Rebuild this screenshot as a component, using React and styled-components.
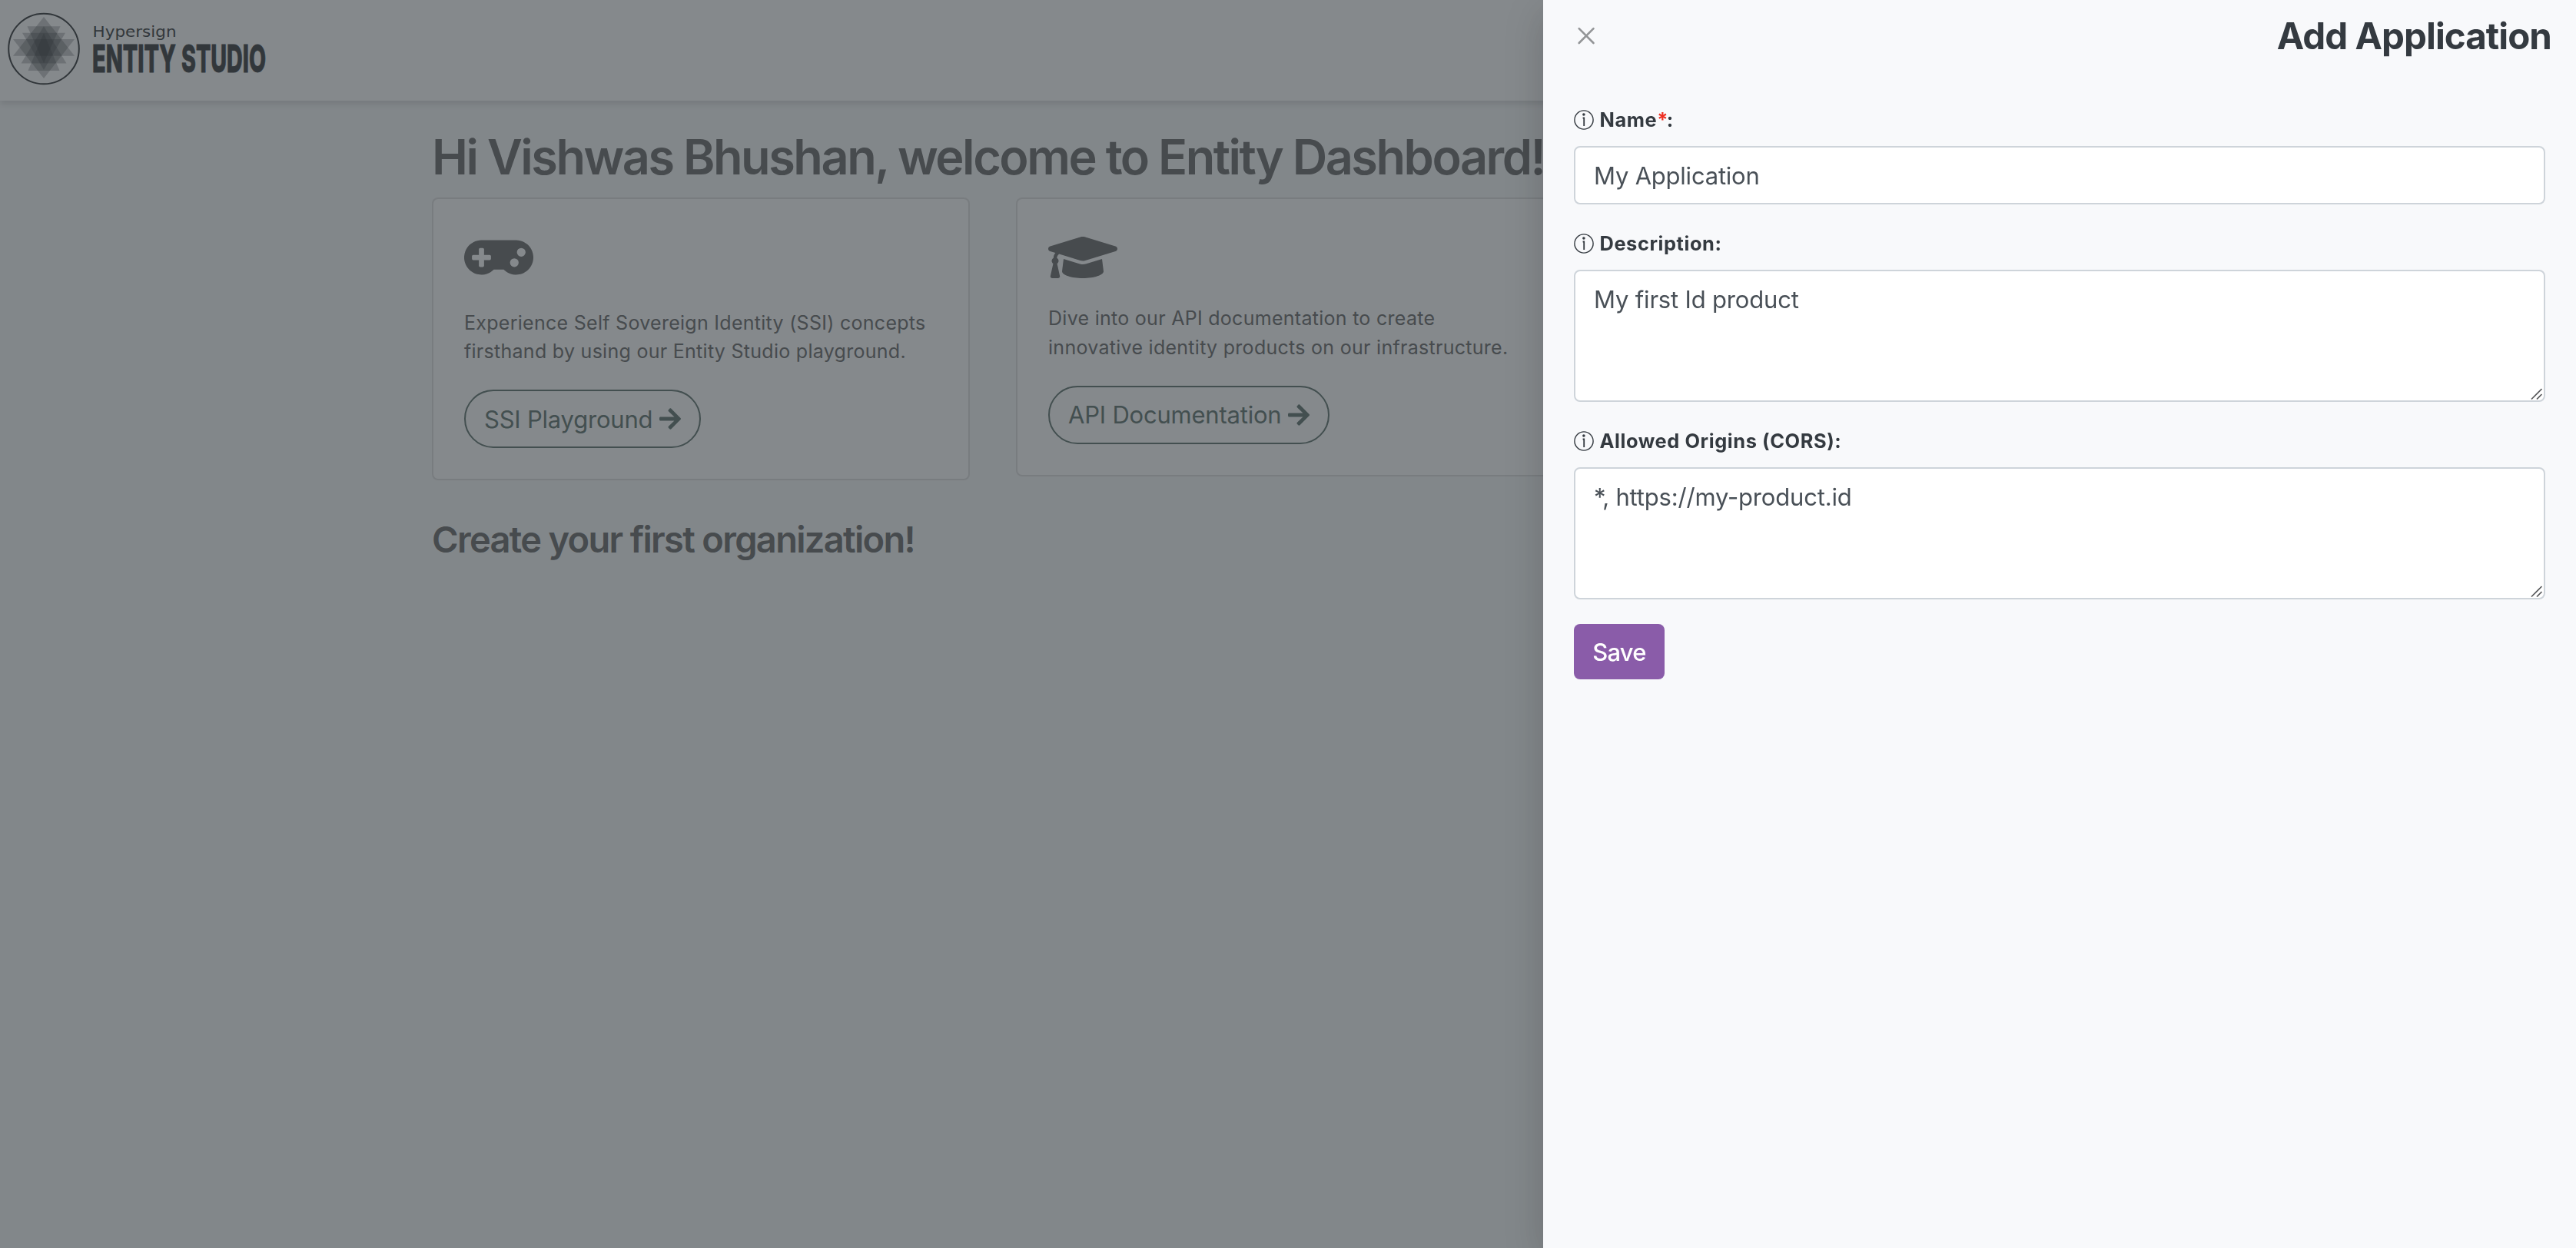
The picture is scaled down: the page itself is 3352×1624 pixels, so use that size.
import React from "react";
import styled, { createGlobalStyle } from "styled-components";
import { FaGamepad, FaGraduationCap, FaArrowRight } from "react-icons/fa";

const GlobalStyle = createGlobalStyle`
  *, *::before, *::after { box-sizing: border-box; }
  html, body { margin: 0; padding: 0; overflow: hidden; }
  body {
    background: #f8f9fa;
    font-family: Inter, "Liberation Sans", sans-serif;
    font-size: 31px;
    color: #343a40;
  }
  h1, h2, p { margin: 0; }
`;

const Page = styled.div`
  display: flex;
  flex-direction: column;
  height: 1624px;
  overflow: hidden;
`;

const TopBar = styled.header`
  display: flex;
  align-items: center;
  height: 131px;
  flex: none;
  padding: 0 8px;
  background: #fff;
  box-shadow: 0 4px 8px rgba(0, 0, 0, 0.14);
`;

const LogoArt = styled.svg`
  display: block;
  width: 350px;
  height: 131px;
  overflow: visible;
`;

const Content = styled.main`
  display: flex;
  flex-direction: column;
  width: 2220px;
  margin-left: 562px;
  padding-top: 35px;
  color: #646464;
`;

const Welcome = styled.h1`
  font-size: 63px;
  font-weight: 600;
  line-height: 77px;
  letter-spacing: -2.48px;
  margin-bottom: 14px;
  white-space: nowrap;
`;

const CardRow = styled.section`
  display: flex;
  align-items: flex-start;
  gap: 60px;
`;

const Card = styled.article`
  display: flex;
  flex-direction: column;
  align-items: flex-start;
  width: 700px;
  padding: 40px;
  background: #fff;
  border: 2px solid rgba(0, 0, 0, 0.125);
  border-radius: 8px;
`;

const CardIcon = styled.span`
  display: flex;
  height: 72px;
  margin-bottom: ${(p) => p.$gap}px;
  svg { width: 90px; height: 72px; }
`;

const CardText = styled.p`
  font-size: 25px;
  line-height: 37.5px;
  letter-spacing: 0.28px;
  margin-bottom: 30.5px;
  white-space: pre-line;
`;

const PillButton = styled.button`
  display: flex;
  align-items: center;
  gap: 9px;
  height: 76px;
  padding: 0 24px;
  border: 2px solid #5a6f69;
  border-radius: 38px;
  background: transparent;
  color: #5a6f69;
  font: 400 31px Inter, sans-serif;
  letter-spacing: -0.21px;
  svg { width: 28px; height: 32px; }
`;

const Prompt = styled.h2`
  margin-top: 48px;
  font-size: 47px;
  font-weight: 600;
  line-height: 58px;
  letter-spacing: -1.69px;
`;

const Backdrop = styled.div`
  position: fixed;
  inset: 0;
  background: #343a40;
  opacity: 0.6;
`;

const Drawer = styled.aside`
  position: fixed;
  top: 0;
  right: 0;
  bottom: 0;
  display: flex;
  flex-direction: column;
  width: 1344px;
  background: #f8f9fb;
  box-shadow: 0 16px 48px rgba(0, 0, 0, 0.175);
`;

const DrawerHeader = styled.header`
  display: flex;
  align-items: center;
  justify-content: space-between;
  height: 94px;
  padding: 0 32px 0 40px;
`;

const CloseButton = styled.button`
  display: flex;
  padding: 0;
  margin: 0 0 0 3px;
  border: 0;
  background: none;
  svg { width: 30px; height: 30px; }
`;

const DrawerTitle = styled.h2`
  font-size: 47.5px;
  font-weight: 700;
  line-height: 72px;
  letter-spacing: -0.96px;
`;

const Form = styled.form`
  display: flex;
  flex-direction: column;
  align-items: stretch;
  gap: 32px;
  padding: 43px 40px 0;
`;

const Field = styled.div`
  display: flex;
  flex-direction: column;
  gap: 16px;
`;

const Label = styled.label`
  display: flex;
  align-items: center;
  gap: 7.5px;
  height: 37px;
  font-size: 25.4px;
  font-weight: 700;
  line-height: 37px;
  letter-spacing: 0.58px;
  svg { width: 26px; height: 26px; }
`;

const Required = styled.span`
  color: #ee2d20;
  letter-spacing: -1.6px;
`;

const TextInput = styled.input`
  width: 100%;
  height: 76px;
  padding: 1px 24px 0;
  border: 2px solid #ced4da;
  border-radius: 8px;
  background: #fff;
  color: #495057;
  font: 400 31px Inter, sans-serif;
  letter-spacing: -0.22px;
  outline: none;
`;

const AreaWrap = styled.div`
  position: relative;
  display: flex;
`;

const TextArea = styled.textarea`
  width: 100%;
  height: 172px;
  padding: 13px 24px 11px;
  border: 2px solid #ced4da;
  border-radius: 8px;
  background: #fff;
  color: #495057;
  font: 400 31px/48px Inter, sans-serif;
  letter-spacing: -0.18px;
  resize: none;
  outline: none;
  overflow: hidden;
`;

const Grip = styled.svg`
  position: absolute;
  right: 3px;
  bottom: 2px;
  width: 16px;
  height: 16px;
`;

const SaveButton = styled.button`
  align-self: flex-start;
  width: 118px;
  height: 72px;
  padding: 0;
  border: 0;
  border-radius: 8px;
  background: #8a5ca9;
  color: #fff;
  font: 500 31px Inter, sans-serif;
  letter-spacing: -0.8px;
`;

function Logo() {
  return (
    <LogoArt viewBox="8 0 350 131">
      <circle cx="57" cy="63.5" r="45.8" fill="none" stroke="#2b2e31" strokeWidth="2" />
      <g fill="#23262a" fillOpacity="0.27">
        <path d="M57 22 L97 72.7 H17 Z" />
        <path d="M57 34 L86.5 82.5 H27.5 Z" />
        <path d="M57 43 L77.5 92 H36.5 Z" />
        <path d="M57 102 L17 51 H97 Z" />
        <path d="M57 91 L29 42.7 H85 Z" />
        <path d="M57 82 L35.5 34.3 H78.5 Z" />
      </g>
      <text x="120.5" y="47.7" fontFamily="DejaVu Sans, sans-serif" fontSize="19" fill="#303336" textLength="109" lengthAdjust="spacingAndGlyphs">
        Hypersign
      </text>
      <g fontFamily="Inter, sans-serif" fontWeight="800" fontSize="50" fill="#303336" stroke="#303336" strokeWidth="0.9">
        <text x="120" y="93.5" textLength="109" lengthAdjust="spacingAndGlyphs">ENTITY</text>
        <text x="236" y="93.5" textLength="110" lengthAdjust="spacingAndGlyphs">STUDIO</text>
      </g>
    </LogoArt>
  );
}

function InfoIcon() {
  return (
    <svg viewBox="0 0 26 26" fill="none" stroke="#343a40">
      <circle cx="13" cy="13" r="12.1" strokeWidth="1.4" />
      <circle cx="12.9" cy="6" r="1.8" fill="#343a40" stroke="none" />
      <path d="M11.6 10.5 H13.2 V21" strokeWidth="1.8" />
    </svg>
  );
}

function ResizableArea({ value }) {
  return (
    <AreaWrap>
      <TextArea defaultValue={value} spellCheck={false} />
      <Grip viewBox="0 0 16 16" fill="none" stroke="#58595b" strokeWidth="1.7">
        <path d="M1 14.5 L14.5 1 M8 14.5 L14.5 8" />
      </Grip>
    </AreaWrap>
  );
}

export default function App() {
  return (
    <>
      <GlobalStyle />
      <Page>
        <TopBar>
          <Logo />
        </TopBar>
        <Content>
          <Welcome>Hi Vishwas Bhushan, welcome to Entity Dashboard!</Welcome>
          <CardRow>
            <Card>
              <CardIcon $gap={30.5}><FaGamepad /></CardIcon>
              <CardText>{"Experience Self Sovereign Identity (SSI) concepts\nfirsthand by using our Entity Studio playground."}</CardText>
              <PillButton>SSI Playground <FaArrowRight /></PillButton>
            </Card>
            <Card>
              <CardIcon $gap={25}><FaGraduationCap /></CardIcon>
              <CardText>{"Dive into our API documentation to create\ninnovative identity products on our infrastructure."}</CardText>
              <PillButton>API Documentation <FaArrowRight /></PillButton>
            </Card>
          </CardRow>
          <Prompt>Create your first organization!</Prompt>
        </Content>
      </Page>
      <Backdrop />
      <Drawer>
        <DrawerHeader>
          <CloseButton aria-label="Close">
            <svg viewBox="0 0 30 30" stroke="#939597" strokeWidth="2.6" strokeLinecap="round">
              <path d="M3.7 5.2 L22.5 24 M22.5 5.2 L3.7 24" />
            </svg>
          </CloseButton>
          <DrawerTitle>Add Application</DrawerTitle>
        </DrawerHeader>
        <Form>
          <Field>
            <Label><InfoIcon /><span>Name<Required>*</Required>:</span></Label>
            <TextInput defaultValue="My Application" />
          </Field>
          <Field>
            <Label><InfoIcon /><span>Description:</span></Label>
            <ResizableArea value="My first Id product" />
          </Field>
          <Field>
            <Label><InfoIcon /><span>Allowed Origins (CORS):</span></Label>
            <ResizableArea value="*, https://my-product.id" />
          </Field>
          <SaveButton type="button">Save</SaveButton>
        </Form>
      </Drawer>
    </>
  );
}
